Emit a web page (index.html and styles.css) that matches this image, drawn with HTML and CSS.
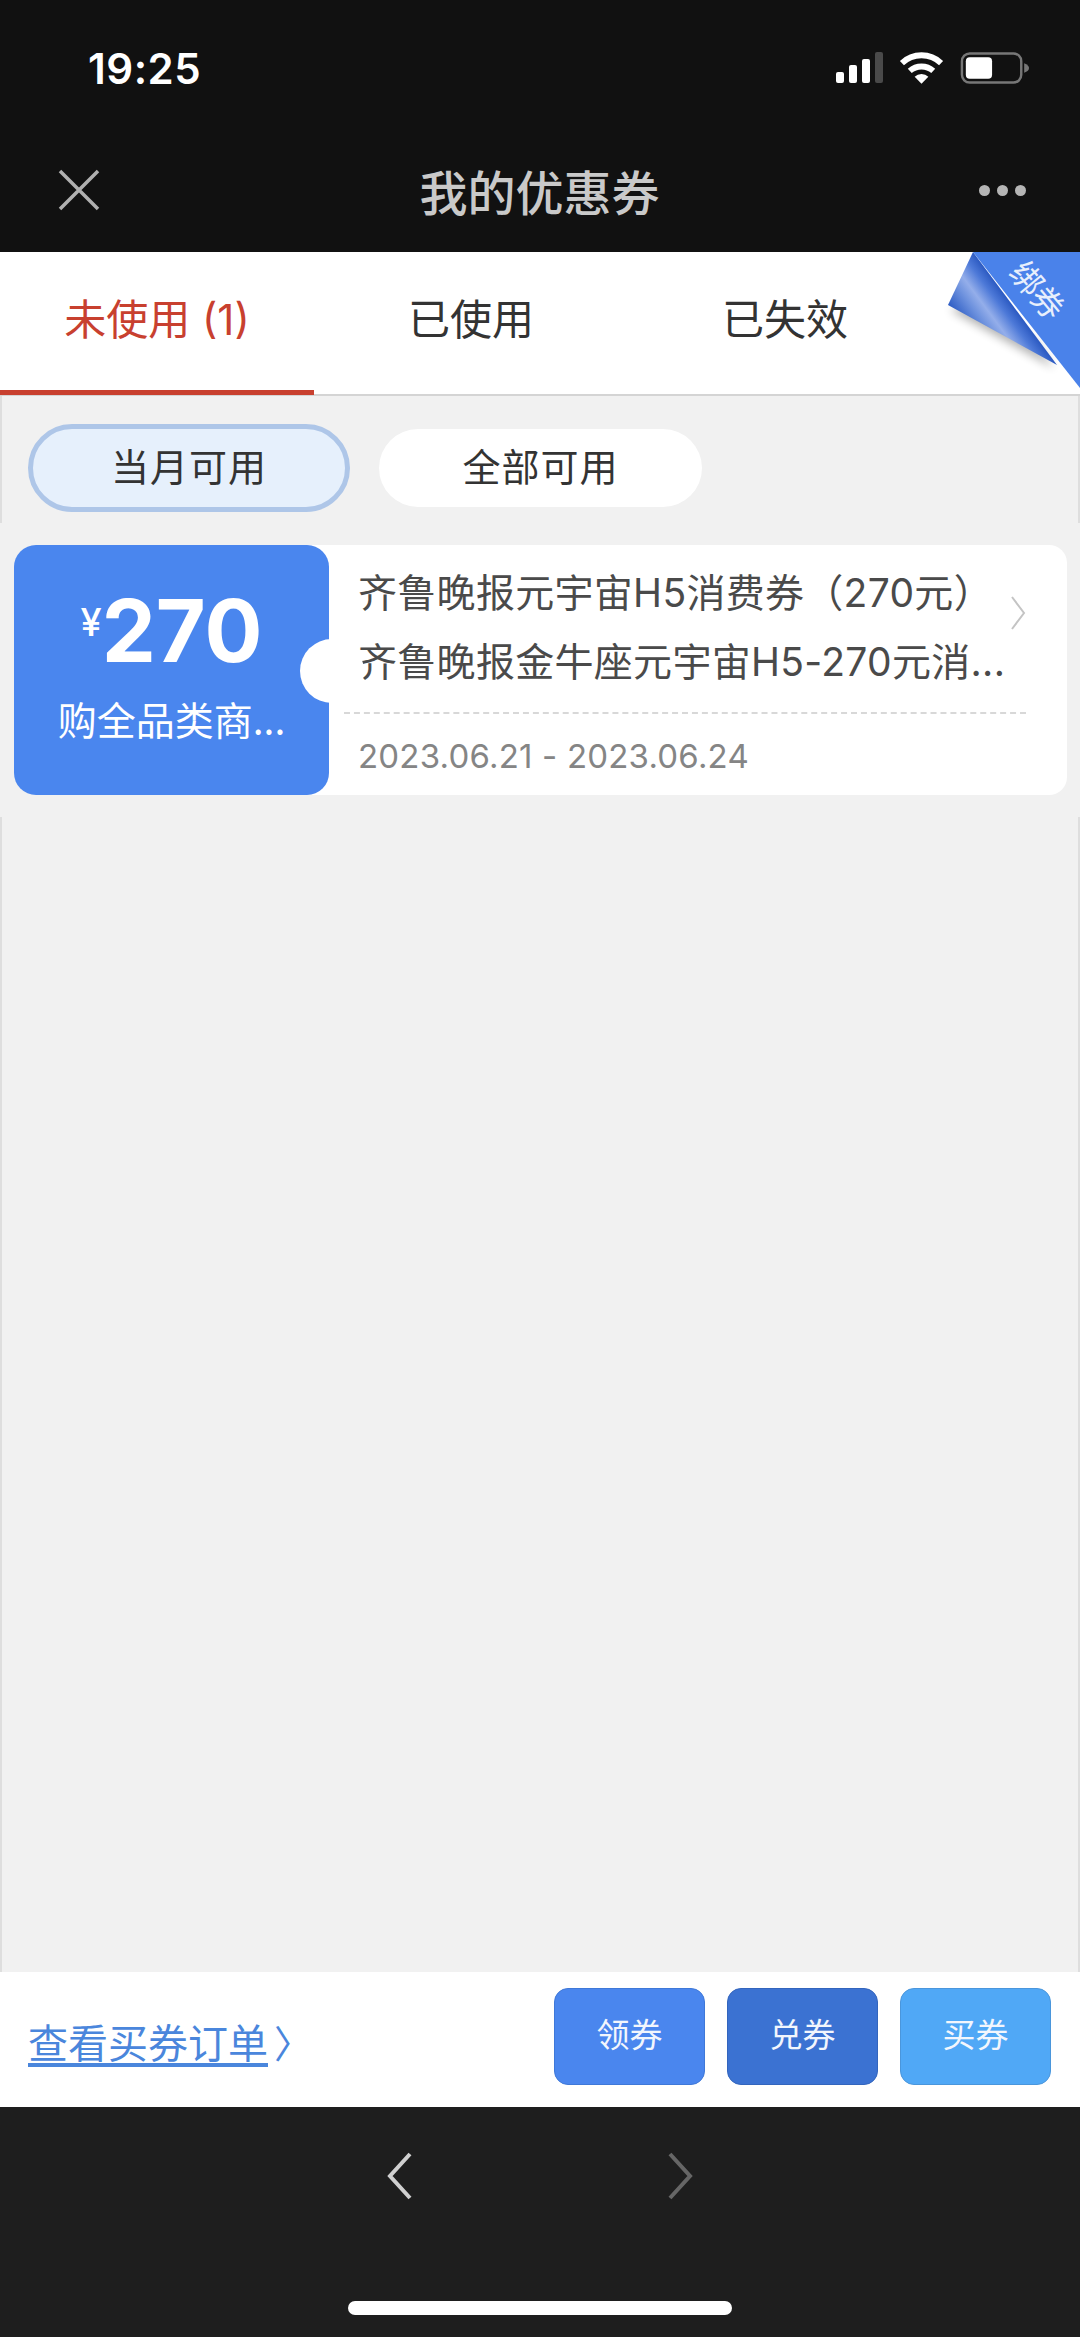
FILE: index.html
```html
<!DOCTYPE html>
<html lang="zh-CN">
<head>
    <meta charset="UTF-8">
    <meta name="viewport" content="width=device-width, initial-scale=1.0">
    <title>我的优惠券</title>
    <link rel="stylesheet" href="styles.css">
</head>
<body>
    <div class="top-bar">
        <div class="status-bar">
            <span class="time">19:25</span>
            <div class="status-icons">
                <svg width="47" height="34" viewBox="0 0 47 34">
                    <rect x="0" y="21" width="8" height="11" rx="2" fill="#fff"/>
                    <rect x="13" y="14" width="8" height="18" rx="2" fill="#fff"/>
                    <rect x="26" y="8" width="8" height="24" rx="2" fill="#fff"/>
                    <rect x="39" y="1" width="8" height="31" rx="2" fill="#4a4a4a"/>
                </svg>
                <svg width="45" height="34" viewBox="0 0 46 34">
                    <path d="M3 12 A29 29 0 0 1 43 12" fill="none" stroke="#fff" stroke-width="6"/>
                    <path d="M11 20 A18 18 0 0 1 35 20" fill="none" stroke="#fff" stroke-width="6"/>
                    <path d="M16 26 A10 10 0 0 1 30 26 L23 33 Z" fill="#fff"/>
                </svg>
                <svg width="70" height="34" viewBox="0 0 72 34">
                    <rect x="2" y="2" width="61" height="30" rx="8" fill="none" stroke="#777" stroke-width="2.5"/>
                    <rect x="6" y="6" width="27" height="22" rx="4" fill="#fff"/>
                    <path d="M66 12 Q71 14 71 17 Q71 20 66 22 Z" fill="#777"/>
                </svg>
            </div>
        </div>
        <div class="nav-bar">
            <svg class="close-icon" width="42" height="42" viewBox="0 0 42 42">
                <path d="M2 2 L40 40 M40 2 L2 40" stroke="#b0b0b0" stroke-width="3.5" fill="none"/>
            </svg>
            <h1 class="page-title">我的优惠券</h1>
            <div class="more-dots"><i></i><i></i><i></i></div>
        </div>
    </div>

    <div class="tabs">
        <div class="tab active">未使用 (1)</div>
        <div class="tab">已使用</div>
        <div class="tab">已失效</div>
        <svg class="corner-fold" width="144" height="144" viewBox="0 0 144 144">
            <defs>
                <linearGradient id="fold-grad" gradientUnits="userSpaceOnUse" x1="12" y1="53" x2="54" y2="22">
                    <stop offset="0" stop-color="#2c5cc4"/>
                    <stop offset="0.35" stop-color="#6e92de"/>
                    <stop offset="0.55" stop-color="#94aeea"/>
                    <stop offset="0.8" stop-color="#4d79d8"/>
                    <stop offset="1" stop-color="#2a58c0"/>
                </linearGradient>
                <filter id="fold-shadow" x="-20%" y="-20%" width="140%" height="140%">
                    <feGaussianBlur stdDeviation="5"/>
                </filter>
            </defs>
            <path d="M14 58 L118 116 L100 90 L40 50 Z" fill="#000" opacity="0.3" filter="url(#fold-shadow)"/>
            <path d="M37 0 L12 53 L121 113 Z" fill="url(#fold-grad)"/>
            <path d="M37 0 L144 0 L144 136 Z" fill="#4a82ea"/>
        </svg>
        <span class="fold-label">绑券</span>
    </div>

    <div class="content">
        <div class="filters">
            <div class="pill selected">当月可用</div>
            <div class="pill">全部可用</div>
        </div>

        <div class="coupon-list">
            <div class="coupon">
                <div class="coupon-left">
                    <div class="amount"><span class="yen">¥</span>270</div>
                    <div class="scope">购全品类商...</div>
                </div>
                <div class="notch"></div>
                <div class="coupon-right">
                    <div class="coupon-head">
                        <div class="coupon-text">
                            <div class="coupon-line">齐鲁晚报元宇宙H5消费券（270元）</div>
                            <div class="coupon-line">齐鲁晚报金牛座元宇宙H5-270元消...</div>
                        </div>
                        <svg class="coupon-arrow" width="16" height="34" viewBox="0 0 16 34">
                            <path d="M2 1 L14 17 L2 33" fill="none" stroke="#c4c4c4" stroke-width="2"/>
                        </svg>
                    </div>
                    <div class="coupon-date">2023.06.21 - 2023.06.24</div>
                </div>
            </div>
        </div>
    </div>

    <div class="action-bar">
        <a class="order-link"><span class="order-text">查看买券订单</span><span class="order-arrow">〉</span></a>
        <div class="action-buttons">
            <div class="btn btn-get">领券</div>
            <div class="btn btn-swap">兑券</div>
            <div class="btn btn-buy">买券</div>
        </div>
    </div>

    <div class="bottom-bar">
        <div class="browser-nav">
            <svg width="26" height="48" viewBox="0 0 26 48">
                <path d="M23 2 L3 24 L23 46" fill="none" stroke="#d0d0d0" stroke-width="4"/>
            </svg>
            <svg width="26" height="48" viewBox="0 0 26 48">
                <path d="M3 2 L23 24 L3 46" fill="none" stroke="#666" stroke-width="4"/>
            </svg>
        </div>
        <div class="home-bar"></div>
    </div>
</body>
</html>
```

FILE: styles.css
```css
* {
    box-sizing: border-box;
}
html, body {
    margin: 0;
    padding: 0;
    width: 1080px;
    height: 2337px;
    overflow: hidden;
}
body {
    display: flex;
    flex-direction: column;
    font-family: "Inter", "Noto Sans CJK SC", sans-serif;
    background: #f1f1f1;
}
.top-bar {
    height: 252px;
    background: #111;
    flex-shrink: 0;
}
.status-bar {
    height: 128px;
    display: flex;
    justify-content: space-between;
    align-items: center;
    padding: 8px 50px 0 88px;
}
.time {
    color: #fff;
    font-size: 42px;
    font-weight: 600;
    letter-spacing: 0.5px;
}
.status-icons {
    display: flex;
    align-items: center;
    gap: 16px;
}
.nav-bar {
    height: 124px;
    display: flex;
    align-items: center;
    justify-content: space-between;
    padding: 0 54px 0 58px;
}
.close-icon {
    flex-shrink: 0;
}
.page-title {
    margin: 0;
    color: #c9c9c9;
    font-size: 48px;
    font-weight: 500;
    font-family: "Noto Sans CJK SC", sans-serif;
}
.more-dots {
    display: flex;
    gap: 7px;
}
.more-dots i {
    display: block;
    width: 11px;
    height: 11px;
    border-radius: 50%;
    background: #b5b5b5;
}

.tabs {
    position: relative;
    height: 144px;
    background: #fff;
    display: flex;
    border-bottom: 2px solid #d4d4d4;
    flex-shrink: 0;
}
.tab {
    width: 314px;
    height: 143px;
    padding-top: 41px;
    text-align: center;
    font-size: 42px;
    line-height: 54px;
    color: #333;
}
.tab.active {
    color: #c8402f;
    border-bottom: 5px solid #c8402f;
}
.corner-fold {
    position: absolute;
    top: 0;
    right: 0;
}
.fold-label {
    position: absolute;
    left: 999px;
    top: 17px;
    width: 80px;
    text-align: center;
    color: #e8effc;
    font-size: 32px;
    line-height: 40px;
    font-family: "Noto Sans CJK SC", sans-serif;
    transform: rotate(50deg);
}

.content {
    flex: 1;
    border-left: 2px solid #dedede;
    border-right: 2px solid #dedede;
    padding-top: 28px;
}
.filters {
    display: flex;
    align-items: center;
    gap: 29px;
    padding: 0 0 11px 26px;
}
.pill {
    width: 323px;
    height: 78px;
    border-radius: 39px;
    background: #fff;
    text-align: center;
    font-size: 38px;
    line-height: 76px;
    letter-spacing: 1px;
    color: #333;
}
.pill.selected {
    width: 322px;
    height: 88px;
    border: 5px solid #aec6e8;
    border-radius: 44px;
    background: #e6f0fc;
    line-height: 76px;
}

.coupon-list {
    margin: 0 -2px;
    padding: 22px 13px 22px 14px;
    background: #f1f1f1;
}
.coupon {
    position: relative;
    display: flex;
    height: 250px;
}
.coupon-left {
    width: 315px;
    background: #4a86ee;
    border-radius: 22px;
    color: #fff;
    text-align: center;
    flex-shrink: 0;
    position: relative;
    z-index: 1;
}
.amount {
    font-family: "Inter", sans-serif;
    font-weight: 700;
    font-size: 86px;
    line-height: 100px;
    margin-top: 27px;
}
.yen {
    font-size: 38px;
    font-weight: 500;
    vertical-align: 26px;
}
.scope {
    font-size: 39px;
    line-height: 50px;
    margin-top: 12px;
    font-family: "Noto Sans CJK SC", sans-serif;
}
.notch {
    position: absolute;
    left: 286px;
    top: 94px;
    width: 64px;
    height: 64px;
    border-radius: 50%;
    background: #fff;
    z-index: 2;
}
.coupon-right {
    flex: 1;
    margin-left: -20px;
    padding: 0 41px 0 35px;
    background: #fff;
    border-radius: 0 18px 18px 0;
}
.coupon-head {
    height: 169px;
    padding: 0 0 4px 14px;
    display: flex;
    justify-content: space-between;
    align-items: center;
    border-bottom: 2px dashed #d8d8d8;
}
.coupon-line {
    font-size: 39px;
    line-height: 69px;
    color: #4a4a4a;
    white-space: nowrap;
    letter-spacing: 0.3px;
}
.coupon-arrow {
    flex-shrink: 0;
    margin: -28px 0 0 0;
}
.coupon-date {
    padding: 20px 0 0 14px;
    font-size: 33px;
    line-height: 44px;
    color: #858585;
    letter-spacing: 0.2px;
}

.action-bar {
    height: 135px;
    background: #fff;
    display: flex;
    align-items: flex-start;
    justify-content: space-between;
    padding: 16px 29px 0 28px;
    flex-shrink: 0;
}
.order-link {
    margin-top: 30px;
    font-size: 40px;
    line-height: 52px;
    color: #4a86dc;
    display: flex;
    align-items: center;
}
.order-text {
    text-decoration: underline;
    text-underline-offset: 5px;
}
.order-arrow {
    font-size: 38px;
    margin-left: 6px;
}
.action-buttons {
    display: flex;
    gap: 22px;
}
.btn {
    width: 151px;
    height: 97px;
    border-radius: 14px;
    text-align: center;
    font-size: 33px;
    line-height: 92px;
    color: #f2f6fd;
}
.btn-get {
    background: #4a86ee;
    border: 1px solid #3f78d8;
}
.btn-swap {
    background: #3b72d2;
    border: 1px solid #3365bd;
}
.btn-buy {
    background: #50a8f6;
    border: 1px solid #4a96dc;
}

.bottom-bar {
    height: 230px;
    background: #1e1e1e;
    flex-shrink: 0;
    display: flex;
    flex-direction: column;
    align-items: center;
}
.browser-nav {
    display: flex;
    gap: 254px;
    margin-top: 45px;
}
.home-bar {
    width: 384px;
    height: 14px;
    border-radius: 7px;
    background: #fff;
    margin-top: 101px;
}
```
